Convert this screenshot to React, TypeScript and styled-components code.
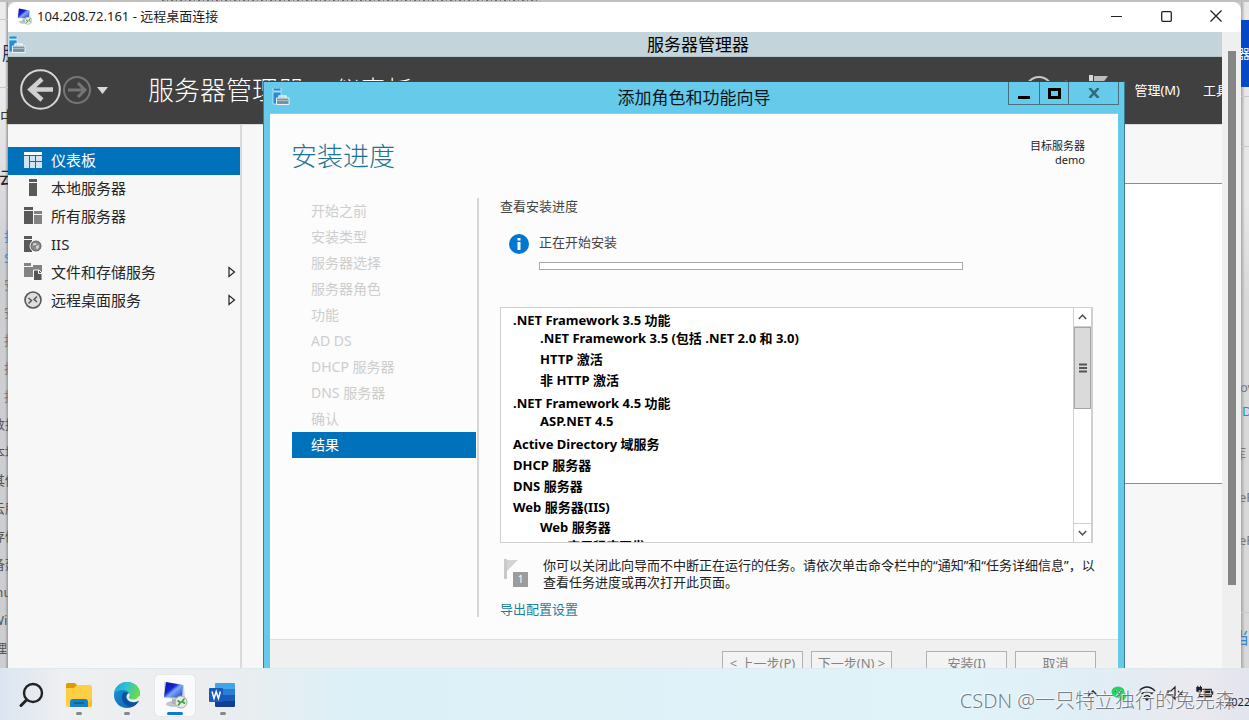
import React from 'react';
import styled, { createGlobalStyle } from 'styled-components';

const GlobalStyle = createGlobalStyle`
  *, *::before, *::after { box-sizing: border-box; }
  body { margin: 0; overflow: hidden; }
  body, button, input { font-family: "Noto Sans", "Noto Sans CJK SC", sans-serif; }
  button { margin: 0; padding: 0; border: 0; background: none; color: inherit; }
  a { color: inherit; text-decoration: none; }
  ul { list-style: none; margin: 0; padding: 0; }
  h1, h2, p { margin: 0; font-weight: 400; }
  svg { display: block; flex: none; }
`;

const Desktop = styled.div`
  position: relative;
  height: 100vh;
  display: grid;
  grid-template-rows: 2px minmax(0, 1fr) 52px;
  grid-template-columns: 8px minmax(0, 1fr) 8px;
  background: #c9cacc;
  overflow: hidden;
`;

const TopEdge = styled.div`
  grid-column: 1 / -1;
  background: #c0bfbe;
`;

const Marks = styled.div`
  width: 30%;
  height: 1px;
  margin-left: 13%;
  background: repeating-linear-gradient(90deg, #666 0 2px, #b5b5b5 2px 5px, #777 5px 6px, #bbb 6px 9px);
`;

const Strip = styled.div<{ $side: 'left' | 'right' }>`
  min-width: 0;
  overflow: hidden;
  white-space: nowrap;
  background: ${p => p.$side === 'left'
    ? 'linear-gradient(90deg, transparent 5px, #9a9a9c 8px), linear-gradient(#ececec 0 84px, #e4e4e6 140px, #cdced2 260px)'
    : 'linear-gradient(270deg, transparent 4px, #a8a8a8 8px), linear-gradient(#e8e8e8 0 200px, #d8d8d8 300px)'};
`;

const Fragment = styled.div<{ $h?: number; $shift?: number; $size?: number; $color?: string }>`
  height: ${p => p.$h ?? 28}px;
  line-height: ${p => p.$h ?? 28}px;
  text-indent: ${p => p.$shift ?? 4}px;
  font-size: ${p => p.$size ?? 13}px;
  color: ${p => p.$color ?? '#77787a'};
`;

const Rule = styled.div<{ $gap: number }>`
  height: ${p => p.$gap}px;
  border-bottom: 1px solid #c8c8c8;
`;

const BlueBlock = styled.div`
  height: 67px;
  margin-top: 18px;
  background: #0549c9;
  color: #fff;
  font-size: 13px;
  line-height: 67px;
  text-indent: -4px;
`;

const Window = styled.section`
  display: flex;
  flex-direction: column;
  min-width: 0;
  min-height: 0;
  overflow: hidden;
  background: #fff;
  border-radius: 8px 8px 0 0;
`;

const WindowBar = styled.header`
  flex: none;
  display: flex;
  align-items: center;
  height: 30px;
  padding: 0 0 2px 8px;
  color: #1b1b1b;
`;

const WindowTitle = styled.h1`
  flex: 1;
  margin-left: 4px;
  font-size: 13px;
  line-height: 28px;
`;

const CaptionButton = styled.button`
  width: 50px;
  height: 28px;
  display: flex;
  align-items: center;
  justify-content: center;
`;

const Viewport = styled.div`
  flex: 1;
  min-height: 0;
  display: flex;
  background: #efefef;
`;

const RemoteClip = styled.div`
  flex: 1;
  min-width: 0;
  overflow: hidden;
`;

/* The remote desktop is wider than the viewport and is cut off on the right. */
const RemoteScreen = styled.div`
  position: relative;
  display: flex;
  flex-direction: column;
  width: calc(100% + 166px);
  height: 100%;
  background: #f7f7f7;
`;

const OuterScroll = styled.div`
  flex: none;
  width: 19px;
  padding: 19px 5px 83px 6px;
`;

const OuterThumb = styled.div`
  height: 100%;
  background: #858585;
`;

const ManagerBar = styled.header`
  flex: none;
  height: 25px;
  display: grid;
  grid-template-columns: 1fr auto 1fr;
  padding-top: 2px;
  background: #c3d5da;
  border-bottom: 1px solid #b4c5ca;
  color: #000;
`;

const BarTitle = styled.h2`
  font-size: 17px;
  line-height: 22px;
`;

const IconSlot = styled.div`
  padding-top: 2px;
`;

const ManagerHeader = styled.div`
  flex: none;
  height: 67px;
  display: flex;
  align-items: center;
  padding: 0 144px 2px 12px;
  background: #404040;
  color: #fff;
`;

const RoundButton = styled.button<{ $size: number }>`
  width: ${p => p.$size}px;
  height: ${p => p.$size}px;
`;

const Breadcrumb = styled.div`
  display: flex;
  flex: 1;
  margin-left: 39px;
  font-size: 26px;
  font-weight: 300;
  line-height: 36px;
  white-space: nowrap;
`;

const Dot = styled.span`
  width: 30px;
  text-align: center;
`;

const HeaderTools = styled.div`
  display: flex;
  align-items: center;
  font-size: 13px;
  white-space: nowrap;
  svg { margin-right: 26px; }
`;

const MenuButton = styled.button`
  font-size: 13px;
  line-height: 20px;
  margin-right: 23px;
  &:last-child { margin-right: 0; }
`;

const ManagerBody = styled.div`
  flex: 1;
  min-height: 0;
  display: flex;
  border-top: 1px solid #dcdcdc;
`;

const Sidebar = styled.nav`
  flex: none;
  width: 234px;
  padding-top: 22px;
  border-right: 2px solid #dadada;
`;

const SideLink = styled.a<{ $active?: boolean }>`
  display: flex;
  align-items: center;
  gap: 8px;
  height: 28px;
  padding: 0 4px 2px 16px;
  font-size: 15px;
  line-height: 26px;
  background: ${p => (p.$active ? '#0072bc' : 'transparent')};
  color: ${p => (p.$active ? '#fff' : '#262626')};
`;

const SideLabel = styled.span`
  flex: 1;
`;

const Canvas = styled.main`
  flex: 1;
  padding: 58px 0 0 60px;
`;

const Panel = styled.div`
  height: 301px;
  background: #fff;
  border-top: 1px solid #8e8e8e;
  border-bottom: 1px solid #8e8e8e;
`;

/* Wizard window floating above the manager. */
const Dialog = styled.section`
  position: absolute;
  top: 49px;
  left: 255px;
  right: 263px;
  padding: 0 6px 7px;
  background: #66caea;
  border: 1px solid #3e7c91;
  border-top-color: #2f4c56;
`;

const DialogBar = styled.header`
  display: grid;
  grid-template-columns: 1fr auto 1fr;
  height: 31px;
  color: #0b1519;
`;

const DialogTitle = styled(BarTitle)`
  line-height: 32px;
`;

const DialogIcon = styled.div`
  padding: 6px 0 0 2px;
`;

const DialogButtons = styled.div`
  justify-self: end;
  display: flex;
  height: 23px;
  margin-right: -1px;
  border: 1px solid #47707f;
  border-top: 0;
`;

const DialogButton = styled.button<{ $w: number }>`
  width: ${p => p.$w}px;
  display: flex;
  align-items: center;
  justify-content: center;
  & + & { border-left: 1px solid #47707f; }
`;

const DialogPage = styled.div`
  background: #fcfcfc;
  border-top: 1px solid #a9c6d0;
`;

const PageHead = styled.div`
  display: flex;
  justify-content: space-between;
  padding: 24px 33px 24px 21px;
`;

const PageTitle = styled.h2`
  font-size: 26px;
  font-weight: 300;
  line-height: 36px;
  color: #1c7393;
`;

const Target = styled.div`
  padding-top: 1px;
  font-size: 11px;
  line-height: 14px;
  text-align: right;
  color: #222;
`;

const PageBody = styled.div`
  display: flex;
  padding: 0 25px 22px 22px;
`;

const Steps = styled.ul`
  flex: none;
  width: 184px;
`;

const Step = styled.li<{ $active?: boolean }>`
  height: 26px;
  padding-left: 19px;
  font-size: 14px;
  line-height: 26px;
  background: ${p => (p.$active ? '#0072bc' : 'transparent')};
  color: ${p => (p.$active ? '#fff' : '#cdcdcd')};
`;

const Main = styled.div`
  flex: 1;
  min-width: 0;
  margin-left: 1px;
  padding-left: 21px;
  border-left: 2px solid #d6d6d6;
  font-size: 13px;
  line-height: 16px;
  color: #444;
`;

const Status = styled.div`
  display: flex;
  gap: 10px;
  margin: 20px 0 37px;
  padding-left: 9px;
`;

const StatusText = styled.label`
  display: flex;
  flex-direction: column;
  gap: 12px;
  flex: 0 1 424px;
`;

const Bar = styled.progress`
  appearance: none;
  display: block;
  width: 100%;
  height: 8px;
  border: 1px solid #a9a9a9;
  background: #fff;
  &::-webkit-progress-bar { background: #fff; }
`;

const ResultBox = styled.div`
  display: flex;
  height: 236px;
  border: 1px solid #cfcfcf;
  background: #fff;
  overflow: hidden;
`;

const Features = styled.ul`
  flex: 1;
  padding: 2px 0 0 12px;
  font-weight: 700;
  line-height: 21px;
  color: #000;
`;

const SubFeatures = styled.ul`
  margin: -3px 0 2px;
  padding-left: 27px;
`;

const Scroll = styled.div`
  display: flex;
  flex-direction: column;
  width: 19px;
  border: 1px solid #cfcfcf;
  border-width: 0 1px;
`;

const ScrollArrow = styled.button`
  height: 19px;
  display: flex;
  align-items: center;
  justify-content: center;
  border-bottom: 1px solid #cfcfcf;
  &:last-child { margin-top: auto; border-top: 1px solid #cfcfcf; border-bottom: 0; }
`;

const ScrollThumb = styled.div`
  height: 82px;
  display: flex;
  align-items: center;
  justify-content: center;
  background: #dadada;
  border: 1px solid #a6a6a6;
`;

const Note = styled.div`
  display: flex;
  gap: 14px;
  margin: 14px -8px 0 0;
  padding-left: 4px;
  line-height: 17px;
  color: #222;
`;

const ExportLink = styled.a`
  display: block;
  width: max-content;
  margin-top: 10px;
  color: #1c7f9f;
`;

const Badge = styled.div`
  position: relative;
  flex: none;
  width: 25px;
  height: 28px;
  margin-top: 2px;
`;

const Count = styled.span`
  position: absolute;
  right: 1px;
  bottom: 0;
  width: 15px;
  height: 15px;
  background: #9c9c9c;
  color: #fff;
  font-size: 10px;
  line-height: 15px;
  text-align: center;
`;

const DialogFooter = styled.footer`
  display: flex;
  justify-content: flex-end;
  gap: 34px;
  padding: 11px 22px 12px;
  background: #f0f0f0;
  border-top: 1px solid #dedede;
`;

const FooterGroup = styled.div`
  display: flex;
  gap: 8px;
`;

const FooterButton = styled.button`
  width: 81px;
  height: 24px;
  border: 1px solid #adb2b5;
  background: #f3f3f3;
  color: #838383;
  font-size: 13px;
  line-height: 22px;
  white-space: nowrap;
`;

const Taskbar = styled.footer`
  grid-column: 1 / -1;
  display: flex;
  justify-content: space-between;
  padding-left: 11px;
  overflow: hidden;
  background: linear-gradient(90deg, #dbe5f1 0, #eeeff1 5%, #ebedef 18%, #dcf0f7 28%, #e0f3f9 78%, #e1edf5 88%, #ebe9ef 96%, #e2e4ee 100%);
  border-top: 1px solid #dce9ef;
`;

const Apps = styled.div`
  display: flex;
  gap: 8px;
  padding-top: 6px;
`;

const AppButton = styled.button<{ $state?: 'open' | 'active' }>`
  display: flex;
  flex-direction: column;
  align-items: center;
  width: 40px;
  height: 41px;
  padding-top: 6px;
  border-radius: 4px;
  background: ${p => (p.$state === 'active' ? '#f9fafb' : 'transparent')};
  box-shadow: ${p => (p.$state === 'active' ? '0 0 1px #bbb' : 'none')};
  &::after {
    content: '';
    width: ${p => (p.$state === 'active' ? 16 : 6)}px;
    height: 3px;
    margin-top: 3px;
    border-radius: 2px;
    background: ${p => (p.$state === 'active' ? '#0b78d4' : p.$state === 'open' ? '#858789' : 'transparent')};
  }
`;

const Tray = styled.div`
  display: flex;
  padding-top: 15px;
  gap: 11px;
  color: #1a1a1a;
`;

const Clock = styled.span`
  width: 24px;
  padding-top: 8px;
  overflow: hidden;
  font-size: 11px;
  line-height: 20px;
`;

const Watermark = styled.div`
  position: absolute;
  right: 14px;
  bottom: 4px;
  font-size: 20px;
  font-weight: 300;
  line-height: 30px;
  white-space: nowrap;
  color: rgba(105, 110, 115, 0.9);
  text-shadow: -1px -1px 0 rgba(255, 255, 255, 0.8);
`;

const ServerIcon = () => (
  <svg width="18" height="18" viewBox="0 0 18 18">
    <path d="M1 0h8v3H1zM1 4h8v7H5v5H1z" fill="#1f8fd9" stroke="#e4f1f8" strokeWidth=".7" />
    <path d="M7 10V8h7v2" fill="none" stroke="#eef4f6" strokeWidth="1.3" />
    <path d="M4.500 10h12.500v6.500H4.500z" fill="#7593a5" stroke="#edf4f6" />
    <path d="M5 12.500h12" stroke="#a8bdc8" />
  </svg>
);

const RdpIcon = ({ size }: { size: number }) => (
  <svg width={size} height={size} viewBox="0 0 28 28">
    <defs>
      <linearGradient id={`screen${size}`} x1="0" y1="0" x2="1" y2="1">
        <stop offset="0" stopColor="#10109a" />
        <stop offset=".4" stopColor="#1426d6" />
        <stop offset=".55" stopColor="#7eaaf0" />
        <stop offset="1" stopColor="#1632cc" />
      </linearGradient>
    </defs>
    <ellipse cx="13" cy="23" rx="8" ry="3" fill="#c3c5ca" />
    <path d="M11 17h7v6h-7z" fill="#aeb1b8" />
    <path d="M3 1l20 3 1 15-21-2z" fill="#d2d5da" />
    <path d="M5 1l17 3-1 13L3 16z" fill={`url(#screen${size})`} />
    <circle cx="20" cy="21" r="6" fill="#e8eae8" stroke="#a9adab" />
    <path d="M16.500 19.500l3 2-2.500 3M23.500 17.500l-2.500 3 3 2" fill="none" stroke="#35a035" strokeWidth="1.600" />
  </svg>
);

const SideIcon = ({ kind }: { kind: string }) => (
  <svg width="19" height="18" viewBox="0 0 19 18">
    {kind === 'dash' && (
      <g fill="#cfe5f4">
        <path d="M0 1h18v3H0z" fill="#fff" />
        <path d="M0 5h5v12H0zM6 5h5v5H6zM12 5h6v5h-6zM6 11h5v6H6zM12 11h6v6h-6z" />
      </g>
    )}
    {kind === 'local' && <path d="M5 0h8v3H5zM5 4h8v13H5z" fill="#595959" />}
    {kind === 'all' && (
      <g fill="#595959">
        <path d="M0 0h9v3H0zM0 4h9v13H0z" />
        <path d="M10 4h8v3h-8zM10 8h8v9h-8z" fill="#828282" />
      </g>
    )}
    {kind === 'iis' && (
      <g>
        <path d="M0 1h8v3H0zM0 5h8v12H0z" fill="#595959" />
        <circle cx="12" cy="11" r="6" fill="#8a8a8a" stroke="#f7f7f7" />
        <circle cx="12" cy="11" r="4.800" fill="none" stroke="#6d6d6d" />
        <path d="M9 8.500l3-.5.500 2h-2l-1 1zM12 11l3-1-.5 3-2 1.500z" fill="#d8d8d8" />
      </g>
    )}
    {kind === 'file' && (
      <g>
        <path d="M0 0h7v3H0zM0 4h9V2h9v12H0z" fill="#828282" />
        <path d="M9.500 7h5.500l3 3v7.500H9.500z" fill="#555" stroke="#f7f7f7" />
        <path d="M14.500 7v3.500H18" fill="none" stroke="#f7f7f7" />
      </g>
    )}
    {kind === 'rds' && (
      <g fill="none" stroke="#555">
        <circle cx="9" cy="9" r="8" fill="#dedede" strokeWidth="1.600" />
        <path d="M4.500 7l3 2.500-3 3M13 5.500l-3 3 3 2.500" strokeWidth="1.500" />
      </g>
    )}
  </svg>
);

const Chevron = ({ down }: { down?: boolean }) => (
  <svg width="9" height="6" viewBox="0 0 9 6">
    <path d={down ? 'M.8 1l3.700 3.800L8.200 1' : 'M.8 5l3.700-3.800L8.200 5'} fill="none" stroke="#555" strokeWidth="1.500" />
  </svg>
);

const sideItems = [
  { icon: 'dash', label: '仪表板', active: true },
  { icon: 'local', label: '本地服务器' },
  { icon: 'all', label: '所有服务器' },
  { icon: 'iis', label: 'IIS' },
  { icon: 'file', label: '文件和存储服务', more: true },
  { icon: 'rds', label: '远程桌面服务', more: true },
];

const steps = ['开始之前', '安装类型', '服务器选择', '服务器角色', '功能', 'AD DS', 'DHCP 服务器', 'DNS 服务器', '确认', '结果'];

const features: { name: string; children?: string[] }[] = [
  { name: '.NET Framework 3.5 功能', children: ['.NET Framework 3.5 (包括 .NET 2.0 和 3.0)', 'HTTP 激活', '非 HTTP 激活'] },
  { name: '.NET Framework 4.5 功能', children: ['ASP.NET 4.5'] },
  { name: 'Active Directory 域服务' },
  { name: 'DHCP 服务器' },
  { name: 'DNS 服务器' },
];

const docSubLinks = ['安', '安', '指', '指', '指'];
const docLinks = ['数据', '本地', '其他', '云服', '存储', '备建', 'inu', 'Win', '理'];

const NestedFeature = styled.li`
  padding-left: 27px;
  line-height: 19px;
`;

function ServerManager() {
  return (
    <RemoteScreen>
      <ManagerBar>
        <IconSlot><ServerIcon /></IconSlot>
        <BarTitle>服务器管理器</BarTitle>
      </ManagerBar>
      <ManagerHeader>
        <RoundButton $size={41} aria-label="后退">
          <svg width="41" height="41" viewBox="0 0 41 41" fill="none">
            <circle cx="20.500" cy="20.500" r="19.300" stroke="#d6d6d6" strokeWidth="2" />
            <path d="M33 20.500H11M22 10L10.500 20.500L22 31" stroke="#d0d0d0" strokeWidth="4.500" />
          </svg>
        </RoundButton>
        <RoundButton $size={32} aria-label="前进">
          <svg width="32" height="32" viewBox="0 0 32 32" fill="none" stroke="#757575">
            <circle cx="16" cy="16" r="13" strokeWidth="2" />
            <path d="M7 16h16M17 9l7 7-7 7" strokeWidth="3" />
          </svg>
        </RoundButton>
        <RoundButton $size={16} aria-label="历史记录">
          <svg width="16" height="16" viewBox="0 0 16 16"><path d="M4 5h11l-5.500 7z" fill="#d8d8d8" /></svg>
        </RoundButton>
        <Breadcrumb><span>服务器管理器</span><Dot>·</Dot><span>仪表板</span></Breadcrumb>
        <HeaderTools>
          <svg width="82" height="32" viewBox="0 0 82 32" fill="none">
            <circle cx="13" cy="16" r="13" stroke="#c8c8c8" strokeWidth="2" />
            <path d="M40 6v20" stroke="#8a8a8a" />
            <path d="M63 1h4v26h-4z" fill="#d8d8d8" />
            <path d="M68 2h14l-6 8h-8z" fill="#bdbdbd" />
          </svg>
          <MenuButton>管理(M)</MenuButton>
          <MenuButton>工具(T)</MenuButton>
        </HeaderTools>
      </ManagerHeader>
      <ManagerBody>
        <Sidebar>
          {sideItems.map(item => (
            <SideLink key={item.label} href="#" $active={item.active}>
              <SideIcon kind={item.icon} />
              <SideLabel>{item.label}</SideLabel>
              {item.more && (
                <svg width="8" height="12" viewBox="0 0 8 12"><path d="M1 1.500v9L6.500 6z" fill="none" stroke="#222" strokeWidth="1.200" /></svg>
              )}
            </SideLink>
          ))}
        </Sidebar>
        <Canvas><Panel /></Canvas>
      </ManagerBody>
      <Wizard />
    </RemoteScreen>
  );
}

function Wizard() {
  return (
    <Dialog>
      <DialogBar>
        <DialogIcon><ServerIcon /></DialogIcon>
        <DialogTitle>添加角色和功能向导</DialogTitle>
        <DialogButtons>
          <DialogButton $w={30} aria-label="最小化">
            <svg width="12" height="14"><path d="M0 10h12v3H0z" fill="#000" /></svg>
          </DialogButton>
          <DialogButton $w={29} aria-label="最大化">
            <svg width="13" height="11"><path d="M1.500 1.500h10v8h-10z" fill="none" stroke="#000" strokeWidth="3" /></svg>
          </DialogButton>
          <DialogButton $w={50} aria-label="关闭">
            <svg width="12" height="10" viewBox="0 0 12 10"><path d="M1.500 0l9 10M10.500 0l-9 10" stroke="#35697b" strokeWidth="2.600" /></svg>
          </DialogButton>
        </DialogButtons>
      </DialogBar>
      <DialogPage>
        <PageHead>
          <PageTitle>安装进度</PageTitle>
          <Target>目标服务器<br />demo</Target>
        </PageHead>
        <PageBody>
          <Steps>
            {steps.map(s => <Step key={s} $active={s === '结果'}>{s}</Step>)}
          </Steps>
          <Main>
            <p>查看安装进度</p>
            <Status>
              <svg width="20" height="20" viewBox="0 0 20 20">
                <circle cx="10" cy="10" r="10" fill="#0078d2" />
                <path d="M8.500 4h3v2.500h-3zM8.500 8h3v8h-3z" fill="#fff" />
              </svg>
              <StatusText>
                正在开始安装
                <Bar value={0} max={100} />
              </StatusText>
            </Status>
            <ResultBox>
              <Features>
                {features.map(f => (
                  <li key={f.name}>
                    {f.name}
                    {f.children && <SubFeatures>{f.children.map(c => <li key={c}>{c}</li>)}</SubFeatures>}
                  </li>
                ))}
                <li>
                  Web 服务器(IIS)
                  <ul>
                    <NestedFeature>
                      Web 服务器
                      <ul><NestedFeature>应用程序开发</NestedFeature></ul>
                    </NestedFeature>
                  </ul>
                </li>
              </Features>
              <Scroll>
                <ScrollArrow aria-label="向上滚动"><Chevron /></ScrollArrow>
                <ScrollThumb>
                  <svg width="8" height="10"><path d="M0 1.500h8M0 5h8M0 8.500h8" stroke="#555" strokeWidth="2" /></svg>
                </ScrollThumb>
                <ScrollArrow aria-label="向下滚动"><Chevron down /></ScrollArrow>
              </Scroll>
            </ResultBox>
            <Note>
              <Badge>
                <svg width="15" height="20"><path d="M0 0h3v20H0z" fill="#c9c9c9" /><path d="M3 1h11L3 12z" fill="#d3d3d3" /></svg>
                <Count>1</Count>
              </Badge>
              <p>你可以关闭此向导而不中断正在运行的任务。请依次单击命令栏中的“通知”和“任务详细信息”，以查看任务进度或再次打开此页面。</p>
            </Note>
            <ExportLink href="#">导出配置设置</ExportLink>
          </Main>
        </PageBody>
        <DialogFooter>
          <FooterGroup>
            <FooterButton>&lt; 上一步(P)</FooterButton>
            <FooterButton>下一步(N) &gt;</FooterButton>
          </FooterGroup>
          <FooterGroup>
            <FooterButton>安装(I)</FooterButton>
            <FooterButton>取消</FooterButton>
          </FooterGroup>
        </DialogFooter>
      </DialogPage>
    </Dialog>
  );
}

export default function App() {
  return (
    <>
      <GlobalStyle />
      <Desktop>
        <TopEdge><Marks /></TopEdge>
        <Strip $side="left">
          <Rule $gap={18} />
          <Fragment $h={67} $size={18} $shift={2} $color="#1d2b50">服</Fragment>
          <Rule $gap={1} />
          <Fragment $h={56} $size={15} $shift={0} $color="#333">中</Fragment>
          <Fragment $h={68} $size={17} $shift={-1} $color="#222">云</Fragment>
          <Fragment $h={14} />
          <Fragment $h={20} $color="#2a93d1">找</Fragment>
          <Fragment $h={24} $color="#2a93d1">S</Fragment>
          {docSubLinks.map((t, i) => <Fragment key={i}>{t}</Fragment>)}
          {docLinks.map(t => (
            <Fragment key={t} $shift={t.length > 1 ? -8 : -6} $color="#555">{t}</Fragment>
          ))}
        </Strip>
        <Window>
          <WindowBar>
            <RdpIcon size={17} />
            <WindowTitle>104.208.72.161 - 远程桌面连接</WindowTitle>
            <CaptionButton aria-label="最小化"><svg width="11" height="11"><path d="M0 5.500h11" stroke="#222" /></svg></CaptionButton>
            <CaptionButton aria-label="最大化"><svg width="11" height="11"><rect x=".7" y=".7" width="9.600" height="9.600" rx="1" fill="none" stroke="#222" strokeWidth="1.300" /></svg></CaptionButton>
            <CaptionButton aria-label="关闭"><svg width="12" height="12"><path d="M.5.5l11 11M11.500.5l-11 11" stroke="#222" strokeWidth="1.300" /></svg></CaptionButton>
          </WindowBar>
          <Viewport>
            <RemoteClip><ServerManager /></RemoteClip>
            <OuterScroll><OuterThumb /></OuterScroll>
          </Viewport>
        </Window>
        <Strip $side="right">
          <BlueBlock>器</BlueBlock>
          <Rule $gap={10} />
          <Rule $gap={50} />
          <Fragment $h={226} />
          <Fragment $h={28} $shift={-1}>ov</Fragment>
          <Fragment $h={20} $shift={1} $color="#1a8fe0">D</Fragment>
          <Fragment $h={64} $shift={-8}>库</Fragment>
          <Fragment $h={24} $shift={-2}>eR</Fragment>
          <Fragment $h={62} $shift={-2}>eR</Fragment>
          <Rule $gap={42} />
          <Fragment $h={50} $size={16} $shift={-8} $color="#3a86c8">当</Fragment>
        </Strip>
        <Taskbar>
          <Apps>
            <AppButton aria-label="搜索">
              <svg width="28" height="28" viewBox="0 0 28 28" fill="none" stroke="#222" strokeWidth="2.400" strokeLinecap="round">
                <circle cx="16" cy="12" r="9" /><path d="M9.500 19L4 24.500" strokeWidth="3" />
              </svg>
            </AppButton>
            <AppButton $state="open" aria-label="文件资源管理器">
              <svg width="28" height="28" viewBox="0 0 28 28">
                <path d="M1 3.500Q1 2 2.500 2H10l3 3-3 3H1z" fill="#dc9b08" />
                <path d="M1 7h8l3-3h13q2 0 2 2v18q0 2-2 2H3q-2 0-2-2z" fill="#ffcf43" />
                <path d="M19 26l8-8v6q0 2-2 2z" fill="#f9bb27" />
                <path d="M5 26v-5q0-3 3-3h12q3 0 3 3v5z" fill="#1681c9" />
                <path d="M9 22h10" stroke="#0b5b9b" strokeWidth="1.500" />
              </svg>
            </AppButton>
            <AppButton $state="open" aria-label="Edge">
              <svg width="28" height="28" viewBox="0 0 28 28">
                <defs>
                  <linearGradient id="edgeTop" x1="0" y1="0" x2="1" y2=".3"><stop offset="0" stopColor="#1c9fe0" /><stop offset=".5" stopColor="#31c2cf" /><stop offset="1" stopColor="#68db50" /></linearGradient>
                  <linearGradient id="edgeSide" x1="0" y1="0" x2="1" y2="1"><stop offset="0" stopColor="#1797dd" /><stop offset="1" stopColor="#0b5dae" /></linearGradient>
                </defs>
                <circle cx="14" cy="14" r="13" fill="url(#edgeSide)" />
                <path d="M1 13C2 5 8 1 14 1c8 0 13 5 13 11 0 4-3 7-7 7-3 0-5-1-4-3 2-3-1-7-6-7-4 0-7 1-9 4z" fill="url(#edgeTop)" />
                <path d="M10 12c-3 6 1 13 8 14 4-1 6-3 8-6-6 3-12 1-13-4 0-2 1-3 2-4-2-1-4-1-5 0z" fill="#104f9d" />
                <path d="M16 12c-4 2-3 8 3 9 3 .5 6-.5 8-2l1-6-5 5c-3 1-8 0-7-2 1-1 1-3 0-4z" fill="#ecedef" />
              </svg>
            </AppButton>
            <AppButton $state="active" aria-label="远程桌面连接"><RdpIcon size={28} /></AppButton>
            <AppButton $state="open" aria-label="Word">
              <svg width="28" height="28" viewBox="0 0 28 28">
                <path d="M7 2h18q1 0 1 1v5H6V3q0-1 1-1z" fill="#41a5ee" />
                <path d="M6 8h20v6H6z" fill="#2b7cd3" /><path d="M6 14h20v6H6z" fill="#185abd" />
                <path d="M6 20h20v5q0 1-1 1H7q-1 0-1-1z" fill="#103f91" />
                <rect x="0" y="7" width="14" height="14" rx="1" fill="#185abd" />
                <path d="M3 10.500l2 7 2.200-7 2.200 7 2-7" fill="none" stroke="#fff" strokeWidth="1.500" />
              </svg>
            </AppButton>
          </Apps>
          <Tray>
            <svg width="14" height="18" viewBox="0 0 14 18"><path d="M2 12l5-5 5 5" fill="none" stroke="#222" strokeWidth="1.300" /></svg>
            <svg width="16" height="18" viewBox="0 0 16 18">
              <ellipse cx="7" cy="8" rx="6.500" ry="5.500" fill="#1bd760" /><ellipse cx="11" cy="12" rx="4.500" ry="4" fill="#2be070" />
              <circle cx="5" cy="7" r="1" fill="#064" /><circle cx="9" cy="7" r="1" fill="#064" />
            </svg>
            <svg width="18" height="18" viewBox="0 0 18 18" fill="none" stroke="#222" strokeWidth="1.400">
              <path d="M1 7q8-8 16 0M3.500 10q5.500-5 11 0M6 13q3-3 6 0" /><circle cx="9" cy="15" r="1" fill="#222" />
            </svg>
            <svg width="18" height="18" viewBox="0 0 18 18" fill="none" stroke="#222" strokeWidth="1.200">
              <path d="M1 7h3l4-4v12l-4-4H1zM11 7l5 5M16 7l-5 5" />
            </svg>
            <svg width="18" height="18" viewBox="0 0 20 18" fill="none" stroke="#222" strokeWidth="1.300">
              <path d="M7 5h10v8H4v-3M18.500 7v4" /><path d="M1 3h5v4H1zM2 1v2M5 1v2M3.500 7v4" fill="#222" /><path d="M9 7h6v4H9z" fill="#222" />
            </svg>
            <Clock>2022</Clock>
          </Tray>
        </Taskbar>
        <Watermark>CSDN @一只特立独行的兔先森</Watermark>
      </Desktop>
    </>
  );
}
